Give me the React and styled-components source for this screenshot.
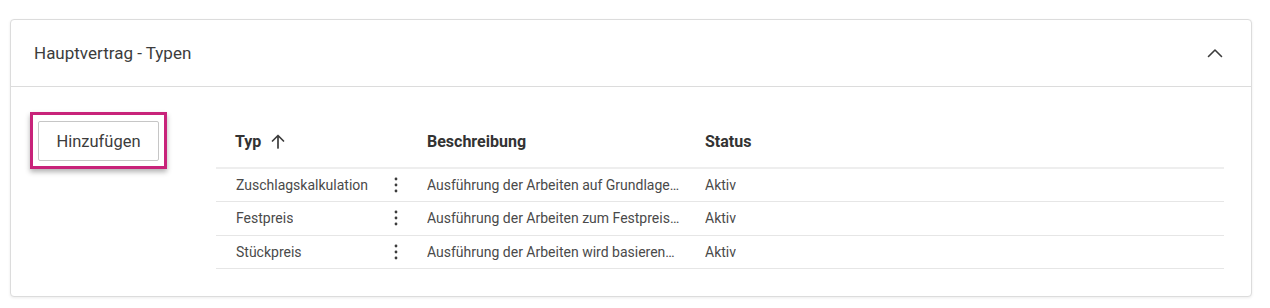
import styled, { createGlobalStyle } from "styled-components";

const GlobalStyle = createGlobalStyle`
  body {
    margin: 0;
    background: #fff;
    font-family: Roboto, "Noto Sans", sans-serif;
    color: #3c3c3c;
  }
`;

const Page = styled.div`
  padding: 19px 18px 12px 10px;
`;

const Card = styled.section`
  border: 1px solid #dcdcdc;
  border-radius: 4px;
  box-shadow: 0 1px 3px rgba(0, 0, 0, 0.08);
  background: #fff;
`;

const CardHeader = styled.header`
  display: flex;
  align-items: center;
  justify-content: space-between;
  height: 66px;
  padding: 0 28px 0 23px;
  border-bottom: 1px solid #dcdcdc;
`;

const Title = styled.h2`
  margin: 0;
  font-size: 17px;
  font-weight: 400;
  color: #3c3c3c;
`;

const CollapseButton = styled.button`
  display: flex;
  align-items: center;
  justify-content: center;
  padding: 0;
  border: 0;
  background: none;
  color: #3c3c3c;
  cursor: pointer;
`;

const CardBody = styled.div`
  display: flex;
  align-items: flex-start;
  gap: 49px;
  padding: 25px 27px 27px 19px;
`;

const Highlight = styled.div`
  padding: 6px 5px 5px 5px;
  border: 3px solid #c8237a;
  box-shadow: 0 3px 5px rgba(0, 0, 0, 0.3);
`;

const Button = styled.button`
  width: 121px;
  height: 40px;
  border: 1px solid #c6c6c6;
  border-radius: 2px;
  background: #fff;
  font-family: inherit;
  font-size: 16.5px;
  color: #3c3c3c;
  cursor: pointer;
`;

const Table = styled.div`
  flex: 1;
  display: grid;
  grid-template-columns: 199px 278px 1fr;
`;

const HeadCell = styled.div`
  display: flex;
  align-items: center;
  gap: 10px;
  height: 52px;
  padding: 3px 12px 0 ${(p) => (p.$first ? "19px" : "12px")};
  border-bottom: 2px solid #eeeeee;
  font-size: 16px;
  font-weight: 700;
  color: #333;
`;

const Cell = styled.div`
  display: flex;
  align-items: center;
  justify-content: space-between;
  height: 32.3px;
  padding: 0 12px 0 ${(p) => (p.$first ? "20px" : "12px")};
  border-bottom: 1px solid #e6e6e6;
  font-size: 14px;
  color: #4a4a4a;
  white-space: nowrap;
  overflow: hidden;
`;

const CellText = styled.span`
  overflow: hidden;
  text-overflow: ellipsis;
`;

const MenuButton = styled.button`
  display: flex;
  align-items: center;
  justify-content: center;
  width: 14px;
  height: 24px;
  padding: 0;
  border: 0;
  background: none;
  color: #3c3c3c;
  cursor: pointer;
`;

const rows = [
  {
    typ: "Zuschlagskalkulation",
    beschreibung: "Ausführung der Arbeiten auf Grundlage…",
    status: "Aktiv",
  },
  {
    typ: "Festpreis",
    beschreibung: "Ausführung der Arbeiten zum Festpreis…",
    status: "Aktiv",
  },
  {
    typ: "Stückpreis",
    beschreibung: "Ausführung der Arbeiten wird basieren…",
    status: "Aktiv",
  },
];

const ChevronUp = () => (
  <svg width="16" height="10" viewBox="0 0 16 10" fill="none">
    <polyline
      points="1.5,8.5 8,2 14.5,8.5"
      stroke="currentColor"
      strokeWidth="1.6"
      strokeLinecap="round"
      strokeLinejoin="round"
    />
  </svg>
);

const SortArrow = () => (
  <svg width="14" height="15" viewBox="0 0 14 15" fill="none">
    <path
      d="M7 14V1.5M1.5 7L7 1.5L12.5 7"
      stroke="#3c3c3c"
      strokeWidth="1.7"
      strokeLinecap="round"
      strokeLinejoin="round"
    />
  </svg>
);

const Kebab = () => (
  <svg width="4" height="16" viewBox="0 0 4 16" fill="currentColor">
    <circle cx="2" cy="2" r="1.4" />
    <circle cx="2" cy="8" r="1.4" />
    <circle cx="2" cy="14" r="1.4" />
  </svg>
);

export default function App() {
  return (
    <>
      <GlobalStyle />
      <Page>
        <Card>
          <CardHeader>
            <Title>Hauptvertrag - Typen</Title>
            <CollapseButton aria-label="Einklappen">
              <ChevronUp />
            </CollapseButton>
          </CardHeader>
          <CardBody>
            <Highlight>
              <Button>Hinzufügen</Button>
            </Highlight>
            <Table>
              <HeadCell $first>
                Typ <SortArrow />
              </HeadCell>
              <HeadCell>Beschreibung</HeadCell>
              <HeadCell>Status</HeadCell>
              {rows.map((row) => (
                <>
                  <Cell $first key={row.typ + "-typ"}>
                    <CellText>{row.typ}</CellText>
                    <MenuButton aria-label="Aktionen">
                      <Kebab />
                    </MenuButton>
                  </Cell>
                  <Cell key={row.typ + "-desc"}>
                    <CellText>{row.beschreibung}</CellText>
                  </Cell>
                  <Cell key={row.typ + "-status"}>
                    <CellText>{row.status}</CellText>
                  </Cell>
                </>
              ))}
            </Table>
          </CardBody>
        </Card>
      </Page>
    </>
  );
}
